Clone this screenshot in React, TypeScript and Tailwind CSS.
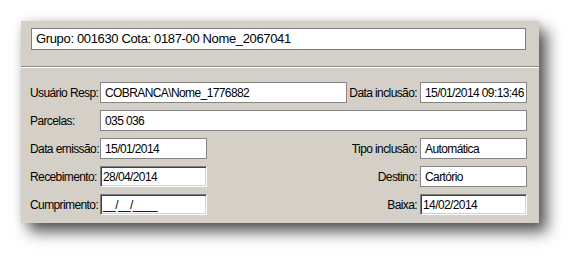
import React from "react";

const font = { fontFamily: '"Liberation Sans", Arial, sans-serif' };

function Field({ value, w, sunken }: { value: string; w: string; sunken?: boolean }) {
  if (sunken) {
    return (
      <div
        className={`${w} h-[21px] bg-white flex items-center pl-[2px] border border-t-[#808080] border-l-[#808080] border-b-white border-r-white shadow-[inset_1px_1px_0_#404040,inset_-1px_-1px_0_#d4d0c8] text-[12px] tracking-[-0.6px] text-black whitespace-nowrap overflow-hidden`}
      >
        {value}
      </div>
    );
  }
  return (
    <div
      className={`${w} h-[21px] bg-white flex items-center pl-[4px] border border-[#858585] text-[12px] tracking-[-0.6px] text-black whitespace-nowrap overflow-hidden`}
    >
      {value}
    </div>
  );
}

function Label({ children, right }: { children: React.ReactNode; right?: boolean }) {
  return (
    <div
      className={`text-[12px] tracking-[-0.6px] text-black whitespace-nowrap ${
        right ? "flex-1 text-right pr-[3px]" : "w-[70px] shrink-0"
      }`}
    >
      {children}
    </div>
  );
}

export default function App() {
  return (
    <div className="w-[581px] h-[266px] bg-white pt-[21px] pl-[21px]" style={font}>
      <div className="w-[518px] h-[202px] bg-[#d4d0c8] shadow-[8px_9px_14px_rgba(0,0,0,0.65),0_0_8px_rgba(0,0,0,0.12)] flex flex-col">
        <div className="pt-[7px] pl-[10px]">
          <div className="w-[495px] h-[22px] bg-white border border-[#7e7e7e] flex items-center pl-[4px] text-[13px] tracking-[-0.35px] text-black whitespace-nowrap">
            Grupo: 001630 Cota: 0187-00 Nome_2067041
          </div>
        </div>
        <div className="mt-[16px] border-t border-t-[#8c8c8c] border-b border-b-white" />
        <div className="mt-[14px] flex flex-col gap-[7px] pl-[9px] pr-[12px]">
          <div className="flex items-center">
            <Label>Usuário Resp:</Label>
            <Field value="COBRANCA\Nome_1776882" w="w-[247px]" />
            <Label right>Data inclusão:</Label>
            <Field value="15/01/2014 09:13:46" w="w-[107px]" />
          </div>
          <div className="flex items-center">
            <Label>Parcelas:</Label>
            <Field value="035 036" w="w-[427px]" />
          </div>
          <div className="flex items-center">
            <Label>Data emissão:</Label>
            <Field value="15/01/2014" w="w-[107px]" />
            <Label right>Tipo inclusão:</Label>
            <Field value="Automática" w="w-[107px]" />
          </div>
          <div className="flex items-center">
            <Label>Recebimento:</Label>
            <Field value="28/04/2014" w="w-[107px]" sunken />
            <Label right>Destino:</Label>
            <Field value="Cartório" w="w-[107px]" />
          </div>
          <div className="flex items-center">
            <Label>Cumprimento:</Label>
            <Field value="__/__/____" w="w-[107px]" sunken />
            <Label right>Baixa:</Label>
            <Field value="14/02/2014" w="w-[107px]" sunken />
          </div>
        </div>
      </div>
    </div>
  );
}
